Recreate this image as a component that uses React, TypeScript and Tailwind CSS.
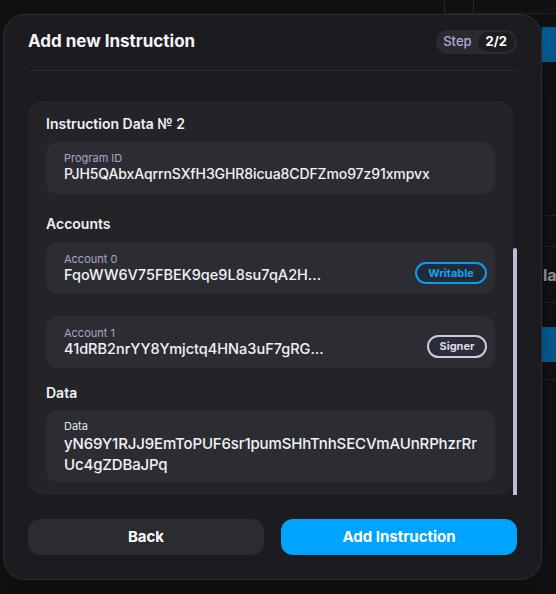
import React from 'react';

const accounts = [
  { label: 'Account 0', value: 'FqoWW6V75FBEK9qe9L8su7qA2H...', role: 'Writable' },
  { label: 'Account 1', value: '41dRB2nrYY8Ymjctq4HNa3uF7gRG...', role: 'Signer' },
];

function RolePill({ role }: { role: string }) {
  if (role === 'Writable') {
    return (
      <span className="flex h-[22px] w-[72px] shrink-0 items-center justify-center rounded-full border-2 border-[#0b9cf0] bg-[#1f2b36] text-[11px] font-bold text-[#1ba0f0]">
        {role}
      </span>
    );
  }
  return (
    <span className="flex h-[23px] w-[60px] shrink-0 items-center justify-center rounded-full border-2 border-[#cbc8e6] text-[11px] font-bold text-[#d9d7ee]">
      {role}
    </span>
  );
}

export default function App() {
  return (
    <div className="relative h-[594px] w-[556px] overflow-hidden bg-[#111114] font-['Inter','Noto_Sans',sans-serif]">
      {/* page behind the dialog */}
      <div className="flex h-full justify-end">
        <div className="flex w-[112px] flex-col">
          <div className="flex h-[14px] border-b border-[#1f1f24]">
            <div className="w-[30px] border-x border-[#26262b]" />
          </div>
          <div className="mt-[13px] ml-auto h-[35px] w-[14px] bg-[#045a8f]" />
          <div className="h-[154px] border-b border-[#202025]" />
          <div className="h-[31px] border-b border-[#202025]" />
          <div className="flex h-[56px] items-center justify-end border-b border-[#202025]">
            <span className="w-[13px] overflow-hidden text-[16px] font-bold text-[#8f8f96]">la</span>
          </div>
          <div className="mt-[24px] ml-auto h-[35px] w-[14px] bg-[#045a8f]" />
          <div className="h-[18px] border-b border-[#202025]" />
        </div>
      </div>

      {/* dialog */}
      <div className="absolute left-[3px] top-[14px] flex h-[566px] w-[539px] flex-col rounded-[22px] border border-[#2d2d33] bg-[#1c1c20] px-[24px] pt-[15px] pb-[24px] shadow-2xl">
        <div className="flex h-[24px] items-center justify-between">
          <h1 className="text-[17px] font-bold text-[#f4f4f6]">Add new Instruction</h1>
          <div className="flex h-[24px] items-center rounded-full bg-[#2a2a30] pl-[7px] pr-[2px]">
            <span className="mr-[6px] text-[13px] font-medium text-[#aeacd0]">Step</span>
            <span className="flex h-[20px] items-center rounded-full bg-[#1d1d21] px-[8px] text-[13px] font-bold text-white">
              2/2
            </span>
          </div>
        </div>

        <div className="mt-[16px] h-[2px] bg-[#2a2a2f]" />

        <div className="mt-[30px] flex flex-1">
          <div className="min-w-0 flex-1 rounded-[14px] bg-[#232328] px-[18px] pt-[13px] pb-[13px]">
            <h2 className="text-[14px] leading-[20px] font-semibold text-[#f0f0f3]">Instruction Data № 2</h2>
            <div className="mt-[8px] h-[52px] rounded-[12px] bg-[#2c2d32] px-[18px] pt-[9px]">
              <div className="text-[11px] leading-[14px] text-[#a9a7c6]">Program ID</div>
              <div className="text-[14px] leading-[18px] font-medium tracking-[-0.1px] text-[#f2f2f5]">
                PJH5QAbxAqrrnSXfH3GHR8icua8CDFZmo97z91xmpvx
              </div>
            </div>

            <h2 className="mt-[20px] text-[14px] leading-[20px] font-semibold text-[#f0f0f3]">Accounts</h2>
            <div className="mt-[8px] flex flex-col gap-[22px]">
              {accounts.map((acc) => (
                <div
                  key={acc.label}
                  className="flex h-[52px] items-end justify-between rounded-[12px] bg-[#2c2d32] pl-[18px] pr-[8px] pb-[10px]"
                >
                  <div>
                    <div className="text-[11px] leading-[14px] text-[#a9a7c6]">{acc.label}</div>
                    <div className="text-[14.5px] leading-[18px] font-medium text-[#f2f2f5]">{acc.value}</div>
                  </div>
                  <RolePill role={acc.role} />
                </div>
              ))}
            </div>

            <h2 className="mt-[15px] text-[14px] leading-[20px] font-semibold text-[#f0f0f3]">Data</h2>
            <div className="mt-[7px] h-[72px] rounded-[12px] bg-[#2c2d32] px-[18px] pt-[9px]">
              <div className="text-[11px] leading-[14px] text-[#e4e4ea]">Data</div>
              <div className="text-[15px] leading-[21px] font-medium tracking-[-0.15px] whitespace-nowrap text-[#f2f2f5]">
                yN69Y1RJJ9EmToPUF6sr1pumSHhTnhSECVmAUnRPhzrRr
                <br />
                Uc4gZDBaJPq
              </div>
            </div>
          </div>
          <div className="flex w-[4px] shrink-0 flex-col justify-end">
            <div className="h-[247px] rounded-t-[2px] bg-[#bdbbd9]" />
          </div>
        </div>

        <div className="mt-[24px] flex gap-[17px]">
          <button className="h-[36px] flex-1 rounded-[12px] bg-[#2b2c31] text-[15px] font-bold text-white">
            Back
          </button>
          <button className="h-[36px] flex-1 rounded-[12px] bg-[#00a3ff] text-[15px] font-bold text-white">
            Add Instruction
          </button>
        </div>
      </div>
    </div>
  );
}
